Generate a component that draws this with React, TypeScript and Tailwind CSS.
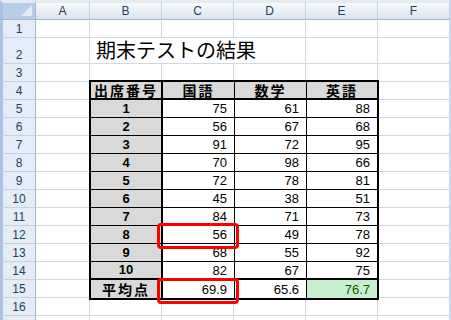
import { Fragment } from "react";

const columns = ["A", "B", "C", "D", "E", "F"];

const scores = [
  { no: 1, kokugo: 75, sugaku: 61, eigo: 88 },
  { no: 2, kokugo: 56, sugaku: 67, eigo: 68 },
  { no: 3, kokugo: 91, sugaku: 72, eigo: 95 },
  { no: 4, kokugo: 70, sugaku: 98, eigo: 66 },
  { no: 5, kokugo: 72, sugaku: 78, eigo: 81 },
  { no: 6, kokugo: 45, sugaku: 38, eigo: 51 },
  { no: 7, kokugo: 84, sugaku: 71, eigo: 73 },
  { no: 8, kokugo: 56, sugaku: 49, eigo: 78 },
  { no: 9, kokugo: 68, sugaku: 55, eigo: 92 },
  { no: 10, kokugo: 82, sugaku: 67, eigo: 75 },
];

const latin = "font-['Liberation_Sans','Noto_Sans_CJK_JP',sans-serif]";
const cjk = "font-['Noto_Sans_CJK_JP','Liberation_Sans',sans-serif]";

const rowHead =
  "border-l-[3px] border-l-[#a9c2e4] bg-[#e4ecf7] border-r border-r-[#9eb6ce] border-b border-b-[#c5d2e3] flex items-end justify-center text-[12px] leading-[15px] text-[#243f60]";
const gridCell = "border-r border-b border-[#d0d7e5]";

function Corner() {
  return (
    <div className="relative border-l-[3px] border-l-[#a9c2e4] border-t-[3px] border-t-[#e6ebf2] bg-[#b9cde8] border-r border-r-[#9eb6ce] border-b border-b-[#9eb6ce]">
      <svg className="absolute right-[3px] bottom-[3px]" width="11" height="11" viewBox="0 0 11 11">
        <polygon points="11,0 11,11 0,11" fill="#e4ecf6" />
      </svg>
    </div>
  );
}

function ScoreTable() {
  const num = "flex items-center justify-end pr-[7px] text-[13px] leading-none";
  return (
    <div
      className={`relative z-10 col-span-4 row-span-12 -mx-px -mt-[2px] -mb-[2px] border-2 border-black bg-white grid grid-cols-[72px_72px_72px_70px] grid-rows-[repeat(12,18px)] ${latin}`}
    >
      {/* header row */}
      <div className={`bg-[#d9d9d9] border-r-2 border-b-2 border-black flex items-center justify-center text-[14px] font-bold tracking-[2px] ${cjk}`}>
        出席番号
      </div>
      <div className={`bg-[#d9d9d9] border-r border-b-2 border-black flex items-center justify-center text-[14px] font-bold tracking-[2px] ${cjk}`}>
        国語
      </div>
      <div className={`bg-[#d9d9d9] border-r border-b-2 border-black flex items-center justify-center text-[14px] font-bold tracking-[2px] ${cjk}`}>
        数学
      </div>
      <div className={`bg-[#d9d9d9] border-b-2 border-black flex items-center justify-center text-[14px] font-bold tracking-[2px] ${cjk}`}>
        英語
      </div>

      {scores.map((s, i) => {
        const last = i === scores.length - 1;
        const bb = last ? "border-b-2" : "border-b";
        return (
          <Fragment key={s.no}>
            <div className={`bg-[#d9d9d9] border-r-2 ${bb} border-black flex items-center justify-center text-[13px] font-bold`}>
              {s.no}
            </div>
            <div className={`${num} border-r ${bb} border-black`}>{s.kokugo}</div>
            <div className={`${num} border-r ${bb} border-black`}>{s.sugaku}</div>
            <div className={`${num} ${bb} border-black`}>{s.eigo}</div>
          </Fragment>
        );
      })}

      {/* average row */}
      <div className={`bg-[#d9d9d9] border-r-2 border-black flex items-center justify-center text-[14px] font-bold tracking-[2px] ${cjk}`}>
        平均点
      </div>
      <div className={`${num} border-r border-black`}>69.9</div>
      <div className={`${num} border-r border-black`}>65.6</div>
      <div className={`${num} bg-[#c6efce] text-[#006100]`}>76.7</div>
    </div>
  );
}

export default function App() {
  const bodyRows = Array.from({ length: 16 }, (_, i) => i + 1);

  return (
    <div className={`relative w-[451px] h-[320px] overflow-hidden bg-white text-black ${latin}`}>
      <div className="grid grid-cols-[36px_54px_72px_72px_72px_72px_72px_1px] grid-rows-[20px_18px_26px_repeat(14,18px)_4px]">
        {/* column headers */}
        <Corner />
        {columns.map((c) => (
          <div
            key={c}
            className="border-t-[3px] border-t-[#e6ebf2] bg-linear-to-b from-[#f8fafd] to-[#dbe3ee] border-r border-r-[#c3d1e4] border-b border-b-[#9eb6ce] flex items-center justify-center text-[12px] text-[#243f60]"
          >
            {c}
          </div>
        ))}
        <div className="bg-[#d3dded]" />

        {bodyRows.map((r) => (
          <Fragment key={r}>
            <div className={rowHead}>{r}</div>
            <div className={gridCell} />
            {r === 2 ? (
              <>
                <div className={`col-span-3 border-r border-b border-[#d0d7e5] flex items-end pl-[6px] pb-[1px] text-[20px] leading-[24px] whitespace-nowrap ${cjk}`}>
                  期末テストの結果
                </div>
                <div className={gridCell} />
              </>
            ) : r === 4 ? (
              <ScoreTable />
            ) : r >= 5 && r <= 15 ? null : (
              <>
                <div className={gridCell} />
                <div className={gridCell} />
                <div className={gridCell} />
                <div className={gridCell} />
              </>
            )}
            <div className={gridCell} />
            <div className="bg-[#d3dded]" />
          </Fragment>
        ))}

        {/* partial row 17 */}
        <div className="border-l-[3px] border-l-[#a9c2e4] bg-[#e4ecf7] border-r border-r-[#9eb6ce]" />
        <div className="border-r border-[#d0d7e5]" />
        <div className="border-r border-[#d0d7e5]" />
        <div className="border-r border-[#d0d7e5]" />
        <div className="border-r border-[#d0d7e5]" />
        <div className="border-r border-[#d0d7e5]" />
        <div className="border-r border-[#d0d7e5]" />
        <div className="bg-[#d3dded]" />
      </div>

      {/* red highlight boxes */}
      <div className="absolute left-[157px] top-[223px] w-[82px] h-[26px] border-[3px] border-[#ff0000] rounded-[4px] z-20" />
      <div className="absolute left-[157px] top-[278px] w-[82px] h-[26px] border-[3px] border-[#ff0000] rounded-[4px] z-20" />
    </div>
  );
}
